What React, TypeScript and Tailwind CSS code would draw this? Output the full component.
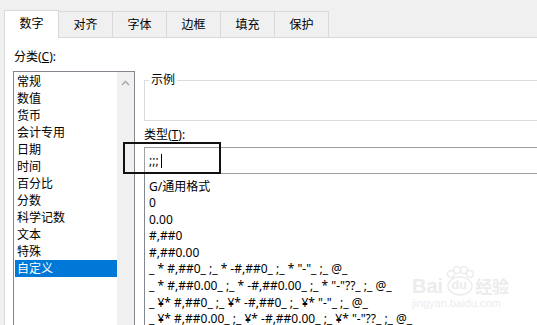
import React from "react";

const tabs = ["数字", "对齐", "字体", "边框", "填充", "保护"];

const categories = [
  "常规",
  "数值",
  "货币",
  "会计专用",
  "日期",
  "时间",
  "百分比",
  "分数",
  "科学记数",
  "文本",
  "特殊",
  "自定义",
];

const formats = [
  "G/通用格式",
  "0",
  "0.00",
  "#,##0",
  "#,##0.00",
  '_ * #,##0_ ;_ * -#,##0_ ;_ * "-"_ ;_ @_',
  '_ * #,##0.00_ ;_ * -#,##0.00_ ;_ * "-"??_ ;_ @_',
  '_ ¥* #,##0_ ;_ ¥* -#,##0_ ;_ ¥* "-"_ ;_ @_',
  '_ ¥* #,##0.00_ ;_ ¥* -#,##0.00_ ;_ ¥* "-"??_ ;_ @_',
];

const App = () => {
  return (
    <div
      className="relative w-[537px] h-[325px] overflow-hidden bg-[#f0f0f0] text-[12px] text-black"
      style={{ fontFamily: '"Noto Sans", "Noto Sans CJK SC", sans-serif' }}
    >
      {/* Tabs */}
      <div className="flex items-end pl-[4px] pt-[10px]">
        {tabs.map((t, i) =>
          i === 0 ? (
            <div
              key={t}
              className="relative z-10 -mb-px flex h-[28px] w-[55px] items-center justify-center border border-b-0 border-[#d9d9d9] bg-white pb-[2px]"
            >
              {t}
            </div>
          ) : (
            <div
              key={t}
              className="-ml-px flex h-[26px] w-[55px] items-center justify-center border border-b-0 border-[#d9d9d9] bg-[#f0f0f0]"
            >
              {t}
            </div>
          )
        )}
      </div>

      {/* Content */}
      <div className="ml-[4px] flex h-[300px] border-l border-t border-[#d9d9d9] bg-white">
        {/* Category column */}
        <div className="ml-[8px] flex w-[122px] shrink-0 flex-col">
          <div className="h-[33px] pt-[11px] pl-[1px] leading-[16px]">
            分类(<span className="underline">C</span>):
          </div>
          <div className="flex flex-1 border border-[#828790]">
            <div className="flex-1 pl-[1px] pt-[1px]">
              {categories.map((c, i) => (
                <div
                  key={c}
                  className={
                    i === categories.length - 1
                      ? "h-[17px] bg-[#0078d7] px-[2px] leading-[17px] text-white"
                      : "h-[17px] px-[2px] leading-[17px]"
                  }
                >
                  {c}
                </div>
              ))}
            </div>
            <div className="flex w-[17px] justify-center bg-[#f0f0f0] pt-[8px]">
              <svg width="9" height="6" viewBox="0 0 9 6">
                <path d="M1 5 L4.5 1.5 L8 5" fill="none" stroke="#a3a3a3" strokeWidth="1.3" />
              </svg>
            </div>
          </div>
        </div>

        {/* Right column */}
        <div className="ml-[9px] flex w-[430px] shrink-0 flex-col">
          <fieldset className="mt-[34px] h-[49px] border border-[#dcdcdc]">
            <legend className="ml-[4px] px-[2px] leading-[16px]">示例</legend>
          </fieldset>
          <div className="mt-[6px] h-[16px] leading-[16px]">
            类型(<span className="underline">T</span>):
          </div>
          <div className="mt-[4px] flex h-[27px] items-center border border-[#a0a0a0] pl-[4px]">
            <span className="leading-[16px]">;;;</span>
            <span className="ml-[2px] h-[14px] w-px bg-black" />
          </div>
          <div className="flex-1 border-x border-[#828790] pt-[4.5px] pl-[4px]">
            {formats.map((f) => (
              <div key={f} className="h-[16.6px] whitespace-pre leading-[16.6px]">
                {f}
              </div>
            ))}
          </div>
        </div>
      </div>

      {/* Annotation box */}
      <div className="absolute left-[123px] top-[142px] h-[32px] w-[98px] border-2 border-[#111]" />

      {/* Watermark */}
      <div className="pointer-events-none absolute left-[412px] top-[266px] flex flex-col text-[#ececec]">
        <div className="flex items-end">
          <span className="text-[20px] font-bold leading-[20px]" style={{ fontFamily: '"Liberation Sans", sans-serif' }}>
            Bai
          </span>
          <span className="relative mx-[1px] flex h-[30px] w-[30px] items-end justify-center">
            <svg className="absolute inset-0" width="30" height="30" viewBox="0 0 30 30">
              <circle cx="7" cy="8" r="3.5" fill="none" stroke="#ececec" strokeWidth="1.5" />
              <circle cx="13" cy="4" r="3.5" fill="none" stroke="#ececec" strokeWidth="1.5" />
              <circle cx="20" cy="4" r="3.5" fill="none" stroke="#ececec" strokeWidth="1.5" />
              <circle cx="26" cy="8" r="3.5" fill="none" stroke="#ececec" strokeWidth="1.5" />
              <ellipse cx="16" cy="20" rx="12" ry="9" fill="none" stroke="#ececec" strokeWidth="1.5" />
            </svg>
            <span className="relative text-[13px] font-bold leading-[22px]" style={{ fontFamily: '"Liberation Sans", sans-serif' }}>
              du
            </span>
          </span>
          <span className="text-[17px] font-bold leading-[20px]" style={{ fontFamily: '"Noto Sans CJK SC", sans-serif' }}>
            经验
          </span>
        </div>
        <span className="text-[11px] leading-[14px]" style={{ fontFamily: '"Liberation Sans", sans-serif' }}>
          jingyan.baidu.com
        </span>
      </div>
    </div>
  );
};

export default App;
